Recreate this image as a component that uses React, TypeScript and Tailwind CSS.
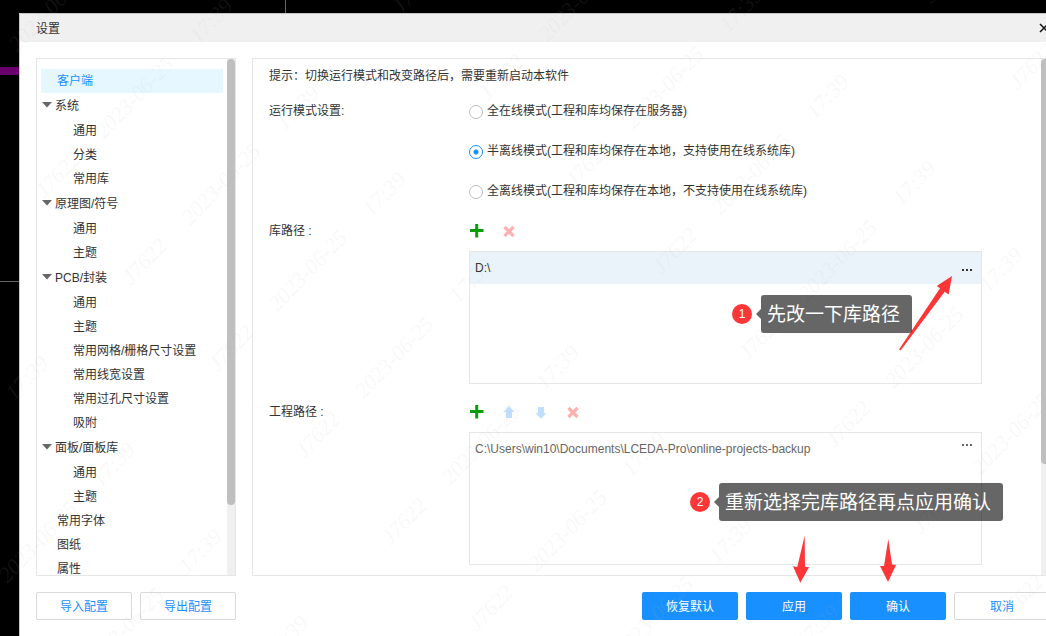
import { useState } from "react";
import type { ReactNode } from "react";

interface TreeItem {
  label: string;
  level: "root" | "group" | "child";
}

const treeItems: TreeItem[] = [
  { label: "客户端", level: "root" },
  { label: "系统", level: "group" },
  { label: "通用", level: "child" },
  { label: "分类", level: "child" },
  { label: "常用库", level: "child" },
  { label: "原理图/符号", level: "group" },
  { label: "通用", level: "child" },
  { label: "主题", level: "child" },
  { label: "PCB/封装", level: "group" },
  { label: "通用", level: "child" },
  { label: "主题", level: "child" },
  { label: "常用网格/栅格尺寸设置", level: "child" },
  { label: "常用线宽设置", level: "child" },
  { label: "常用过孔尺寸设置", level: "child" },
  { label: "吸附", level: "child" },
  { label: "面板/面板库", level: "group" },
  { label: "通用", level: "child" },
  { label: "主题", level: "child" },
  { label: "常用字体", level: "root" },
  { label: "图纸", level: "root" },
  { label: "属性", level: "root" },
];

const levelClass = {
  root: "h-6 pl-4",
  group: "h-[26px] gap-[3px]",
  child: "h-6 pl-8",
};

const modes = [
  { id: "online", label: "全在线模式(工程和库均保存在服务器)" },
  { id: "semi", label: "半离线模式(工程和库均保存在本地，支持使用在线系统库)" },
  { id: "offline", label: "全离线模式(工程和库均保存在本地，不支持使用在线系统库)" },
];

// each stamp line runs down the diagonal, one text every 87px
const stamps = [
  { text: "2023-06-25", x: 48, y: 11, count: 8 },
  { text: "2023-06-25", x: 578, y: 1, count: 6 },
  { text: "2023-06-25", x: 38, y: 542, count: 2 },
  { text: "17:39", x: 211, y: 21, count: 8 },
  { text: "17:39", x: 741, y: 10, count: 4 },
  { text: "17:39", x: 27, y: 378, count: 4 },
  { text: "J7622", x: 58, y: 175, count: 6 },
  { text: "J7622", x: 415, y: -9, count: 8 },
  { text: "J7622", x: 945, y: -20, count: 2 },
];

function PlusIcon() {
  return (
    <svg viewBox="0 0 16 16" className="size-4">
      <path d="M1 7.500h13.500M7.700 1v13.500" stroke="#0a9d0a" strokeWidth="3" />
    </svg>
  );
}

function RemoveIcon() {
  return (
    <svg viewBox="0 0 16 16" className="size-4">
      <path d="M3.500 4l9 9M12.500 4l-9 9" stroke="#ffb0b0" strokeWidth="3.200" />
    </svg>
  );
}

function UpIcon() {
  return (
    <svg viewBox="0 0 16 16" className="size-4">
      <path d="M8 2l5.500 6h-2.500v6H5V8H2.500z" fill="#bfdfff" />
    </svg>
  );
}

function DownIcon() {
  return (
    <svg viewBox="0 0 16 16" className="size-4">
      <path d="M8 15L2.500 9H5V3h6v6h2.500z" fill="#bfdfff" />
    </svg>
  );
}

function ToolButton({ label, children }: { label: string; children: ReactNode }) {
  return (
    <button type="button" aria-label={label} className="size-4">
      {children}
    </button>
  );
}

function PathField({
  label,
  tools,
  path,
  active,
}: {
  label: string;
  tools: ReactNode;
  path: string;
  active?: boolean;
}) {
  return (
    <section className="flex">
      <h3 className="flex h-10 w-50 shrink-0 items-center">{label}</h3>
      <div className="min-w-0 flex-1">
        <div className="flex h-10 items-center gap-4">{tools}</div>
        <div className="h-[133px] border border-[#e6e6e6]">
          <div
            className={`flex h-8 items-center justify-between pl-[5px] pr-2 ${
              active ? "bg-[#eaf3fa] text-[#333333]" : "text-[#666666]"
            }`}
          >
            <span>{path}</span>
            <button type="button" aria-label="浏览" className={active ? "pt-1" : "pb-2"}>
              <svg viewBox="0 0 12 4" className="h-1 w-3" fill={active ? "#333333" : "#666666"}>
                <path d="M1 1h2v2H1zM5 1h2v2H5zM9 1h2v2H9z" />
              </svg>
            </button>
          </div>
        </div>
      </div>
    </section>
  );
}

function Callout({ step, text, className }: { step: number; text: string; className: string }) {
  return (
    <div className={`absolute flex items-center ${className}`}>
      <span className="flex size-5 items-center justify-center rounded-full bg-[#ff3638] text-xs text-white">
        {step}
      </span>
      <svg viewBox="0 0 5 10" className="ml-1 h-[10px] w-[5px]">
        <path d="M5 0v10L0 5z" fill="#000" fillOpacity="0.6" />
      </svg>
      <span className="flex h-[38px] items-center whitespace-nowrap rounded-[3px] bg-black/60 pl-[6px] pr-3 pt-px text-[19px] text-white">
        {text}
      </span>
    </div>
  );
}

const outlineButton = "h-7 w-24 rounded-xs border border-[#d9d9d9] bg-white pt-px text-[#1890ff]";
const primaryButton = "h-7 w-24 rounded-xs bg-[#1890ff] pt-px text-white";

export default function App() {
  const [selected, setSelected] = useState(0);
  const [mode, setMode] = useState("semi");

  return (
    <div className="relative h-screen overflow-hidden bg-black pt-[13px] font-['Liberation_Sans','Noto_Sans_CJK_SC',sans-serif] text-xs text-[#333333]">
      {/* editor canvas behind the dialog */}
      <svg className="absolute left-0 top-0 size-full" aria-hidden="true">
        <path d="M285.500 0v13M0 281.500h19" stroke="#666666" />
        <path d="M0 67h19v8H0z" fill="#6a006a" />
      </svg>

      <div
        role="dialog"
        aria-label="设置"
        className="relative ml-[19px] flex h-full w-full flex-col border-l border-t border-[#c8c8c8] bg-white"
      >
        <header className="flex h-7 shrink-0 items-center justify-between bg-[#f0f0f0] pl-4 pr-4">
          <h2 className="pt-0.5">设置</h2>
          <button type="button" aria-label="关闭">
            <svg viewBox="0 0 10 10" className="size-[10px]">
              <path d="M1 1l8 8M9 1l-8 8" stroke="#111111" strokeWidth="1.500" />
            </svg>
          </button>
        </header>

        <div className="flex min-h-0 flex-1 gap-4 pl-4 pr-[15px] pt-4">
          <nav className="flex w-50 shrink-0 border border-[#e6e6e6]">
            <ul className="min-w-0 flex-1 overflow-hidden px-1 pt-[10px]">
              {treeItems.map((item, i) => (
                <li key={i}>
                  <button
                    type="button"
                    onClick={() => setSelected(i)}
                    className={`flex w-full items-center whitespace-nowrap ${levelClass[item.level]} ${
                      i === selected ? "bg-[#e6f7ff] text-[#1890ff]" : ""
                    }`}
                  >
                    {item.level === "group" && (
                      <svg viewBox="0 0 11 8" className="h-2 w-[11px]">
                        <path d="M1 0h10L6 5.500z" fill="#666666" />
                      </svg>
                    )}
                    {item.label}
                  </button>
                </li>
              ))}
            </ul>
            <div className="w-2 bg-[#f0f0f0]">
              <div className="h-[446px] rounded-full bg-[#bfbfbf]" />
            </div>
          </nav>

          <main className="flex min-w-0 flex-1 border border-r-0 border-[#e6e6e6]">
            <div className="min-w-0 flex-1 overflow-hidden pl-4 pr-[59px]">
              <p className="flex h-8 items-center pt-0.5">提示：切换运行模式和改变路径后，需要重新启动本软件</p>
              <fieldset className="flex" aria-labelledby="mode-title">
                <div id="mode-title" className="flex h-10 w-50 shrink-0 items-center">
                  运行模式设置:
                </div>
                <div>
                  {modes.map((m) => (
                    <div key={m.id} className="flex h-10 items-center gap-1 pt-px">
                      <input
                        id={m.id}
                        type="radio"
                        name="mode"
                        checked={mode === m.id}
                        onChange={() => setMode(m.id)}
                        className="size-[14px] appearance-none rounded-full border border-[#bfbfbf] bg-white checked:border-[#1890ff] checked:bg-[radial-gradient(circle,#1890ff_2px,#ffffff_3px)]"
                      />
                      <label htmlFor={m.id} className="pb-0.5">{m.label}</label>
                    </div>
                  ))}
                </div>
              </fieldset>

              <div className="flex flex-col gap-2">
                <PathField
                  label="库路径 :"
                  path="D:\"
                  active
                  tools={
                    <>
                      <ToolButton label="添加库路径"><PlusIcon /></ToolButton>
                      <ToolButton label="删除库路径"><RemoveIcon /></ToolButton>
                    </>
                  }
                />
                <PathField
                  label="工程路径 :"
                  path="C:\Users\win10\Documents\LCEDA-Pro\online-projects-backup"
                  tools={
                    <>
                      <ToolButton label="添加工程路径"><PlusIcon /></ToolButton>
                      <ToolButton label="上移"><UpIcon /></ToolButton>
                      <ToolButton label="下移"><DownIcon /></ToolButton>
                      <ToolButton label="删除工程路径"><RemoveIcon /></ToolButton>
                    </>
                  }
                />
              </div>
            </div>
            <div className="mr-px w-2 bg-[#f0f0f0]">
              <div className="h-[405px] rounded-full bg-[#bfbfbf]" />
            </div>
          </main>
        </div>

        <footer className="flex shrink-0 justify-between py-4 pl-4 pr-[15px]">
          <div className="flex gap-2">
            <button type="button" className={outlineButton}>导入配置</button>
            <button type="button" className={outlineButton}>导出配置</button>
          </div>
          <div className="flex gap-2">
            <button type="button" className={primaryButton}>恢复默认</button>
            <button type="button" className={primaryButton}>应用</button>
            <button type="button" className={primaryButton}>确认</button>
            <button type="button" className={outlineButton}>取消</button>
          </div>
        </footer>
      </div>

      {/* watermark and guide arrows */}
      <svg className="pointer-events-none absolute left-0 top-0 size-full" aria-hidden="true">
        <g
          fill="#b8b8b8"
          fillOpacity="0.1"
          textAnchor="middle"
          className="font-['Liberation_Serif',serif] text-[22px] italic"
        >
          {stamps.map((s) =>
            Array.from({ length: s.count }, (_, i) => (
              <text
                key={`${s.text}-${s.x}-${i}`}
                transform={`translate(${s.x + i * 86.6} ${s.y + i * 86.6}) rotate(-46)`}
                y="7"
              >
                {s.text}
              </text>
            )),
          )}
        </g>
        <g fill="#ff3638">
          <path d="M952 276l-15.300 10 3.300 2.200L899 349.500l1.500 1 44.200-58.800 4 2.800z" />
          <path d="M804.700 535.500L797.300 567l-4.300-.7 7.300 16.400 8.700-15.400-4-.5z" />
          <path d="M888.300 539L884 566h-4l8 16 8-17-4-.5z" />
        </g>
      </svg>

      <Callout step={1} text="先改一下库路径" className="left-[732px] top-[295px]" />
      <Callout step={2} text="重新选择完库路径再点应用确认" className="left-[690px] top-[483px]" />
    </div>
  );
}
